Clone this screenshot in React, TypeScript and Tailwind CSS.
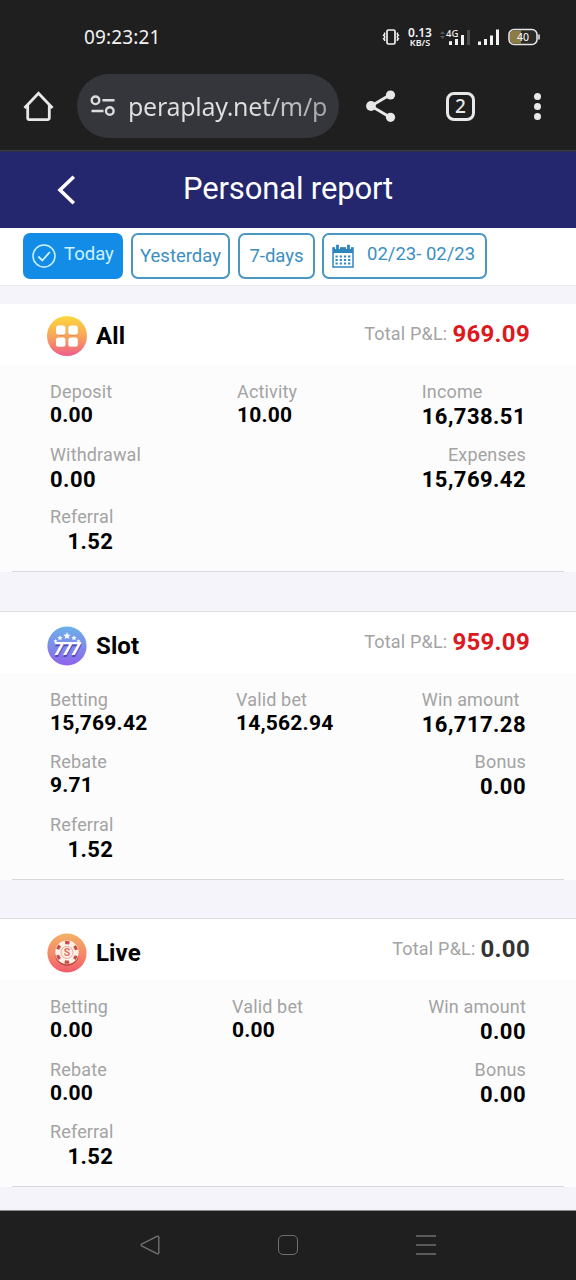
import React from 'react';
import clsx from 'clsx';

type Stat = {
  label: string;
  value: string;
  large?: boolean;
  end?: boolean;
};

type Report = {
  name: string;
  icon: React.ReactNode;
  total: string;
  positive?: boolean;
  sectionClass: string;
  headClass: string;
  middleClass: string;
  left: Stat[];
  middle: Stat;
  right: Stat[];
};

const AllIcon = () => (
  <svg width="40" height="40" viewBox="0 0 40 40">
    <defs>
      <linearGradient id="all-bg" x1="0" y1="0" x2="0" y2="1">
        <stop offset="0" stopColor="#fbd83c" />
        <stop offset="0.5" stopColor="#f8a659" />
        <stop offset="1" stopColor="#ef5c8c" />
      </linearGradient>
    </defs>
    <circle cx="20" cy="20" r="20" fill="url(#all-bg)" />
    <g fill="#c9603f" opacity="0.45">
      <rect x="9.5" y="10.8" width="9" height="9" rx="2.5" />
      <rect x="21.5" y="10.8" width="9" height="9" rx="2.5" />
      <rect x="9.5" y="22.3" width="9" height="9" rx="2.5" />
      <rect x="21.5" y="22.3" width="9" height="9" rx="2.5" />
    </g>
    <g fill="#fff">
      <rect x="9" y="9.5" width="9.5" height="9.2" rx="2.5" />
      <rect x="21.3" y="9.5" width="9.5" height="9.2" rx="2.5" />
      <rect x="9" y="21.5" width="9.5" height="9.2" rx="2.5" />
      <rect x="21.3" y="21.5" width="9.5" height="9.2" rx="2.5" />
    </g>
  </svg>
);

const SlotIcon = () => (
  <svg width="40" height="40" viewBox="0 0 40 40">
    <defs>
      <linearGradient id="slot-bg" x1="0" y1="0" x2="0" y2="1">
        <stop offset="0" stopColor="#69b2ea" />
        <stop offset="0.5" stopColor="#7e8ce8" />
        <stop offset="1" stopColor="#8f63ee" />
      </linearGradient>
    </defs>
    <circle cx="20" cy="20" r="19.6" fill="url(#slot-bg)" />
    <path
      d="M20 6l1.1 2.4 2.6.3-1.9 1.8.5 2.6-2.3-1.3-2.3 1.3.5-2.6-1.9-1.8 2.6-.3zM13 9.2l.8 1.7 1.8.2-1.3 1.3.3 1.8-1.6-.9-1.6.9.3-1.8-1.3-1.3 1.8-.2zM27 9.2l.8 1.7 1.8.2-1.3 1.3.3 1.8-1.6-.9-1.6.9.3-1.8-1.3-1.3 1.8-.2zM8.5 13l.6 1.3 1.4.2-1 1 .2 1.4-1.2-.7-1.2.7.2-1.4-1-1 1.4-.2zM31.5 13l.6 1.3 1.4.2-1 1 .2 1.4-1.2-.7-1.2.7.2-1.4-1-1 1.4-.2z"
      fill="#f2f7ff"
    />
    <g fontFamily="Roboto, sans-serif" fontWeight="900" fontStyle="italic" fontSize="17.5" textAnchor="middle">
      <g fill="#5148b8">
        <text x="11.8" y="30.8">7</text>
        <text x="20.3" y="30.8">7</text>
        <text x="28.8" y="30.8">7</text>
      </g>
      <g fill="#fff">
        <text x="11.6" y="29.4">7</text>
        <text x="20.1" y="29.4">7</text>
        <text x="28.6" y="29.4">7</text>
      </g>
    </g>
  </svg>
);

const LiveIcon = () => (
  <svg width="40" height="40" viewBox="0 0 40 40">
    <defs>
      <linearGradient id="live-bg" x1="0" y1="0" x2="0" y2="1">
        <stop offset="0" stopColor="#f3b266" />
        <stop offset="0.55" stopColor="#f58768" />
        <stop offset="1" stopColor="#f25a6a" />
      </linearGradient>
    </defs>
    <circle cx="20" cy="20" r="19.6" fill="url(#live-bg)" />
    <circle cx="20" cy="21" r="11.8" fill="#b5443f" />
    <circle cx="20" cy="19.4" r="11.8" fill="#fff1e6" />
    <circle
      cx="20"
      cy="19.4"
      r="9.8"
      fill="none"
      stroke="#cb4a48"
      strokeWidth="3.2"
      strokeDasharray="4.4 5.863"
      strokeDashoffset="2.2"
      transform="rotate(30 20 19.4)"
    />
    <circle cx="20" cy="19.4" r="6" fill="#fdf0e6" stroke="#e59a85" strokeWidth="0.8" />
    <text x="20" y="23.2" fontSize="10.5" fontWeight="700" fontFamily="Roboto, sans-serif" textAnchor="middle" fill="#dc7066">
      S
    </text>
  </svg>
);

const reports: Report[] = [
  {
    name: 'All',
    icon: <AllIcon />,
    total: '969.09',
    positive: true,
    sectionClass: 'h-[268px]',
    headClass: 'pt-3',
    middleClass: 'pl-[237px]',
    left: [
      { label: 'Deposit', value: '0.00' },
      { label: 'Withdrawal', value: '0.00', large: true },
      { label: 'Referral', value: '1.52', large: true, end: true },
    ],
    middle: { label: 'Activity', value: '10.00' },
    right: [
      { label: 'Income', value: '16,738.51', large: true },
      { label: 'Expenses', value: '15,769.42', large: true, end: true },
    ],
  },
  {
    name: 'Slot',
    icon: <SlotIcon />,
    total: '959.09',
    positive: true,
    sectionClass: 'h-[268px] shadow-[0_-1px_0_#dedee2]',
    headClass: 'pt-[14px]',
    middleClass: 'pl-[236px]',
    left: [
      { label: 'Betting', value: '15,769.42' },
      { label: 'Rebate', value: '9.71' },
      { label: 'Referral', value: '1.52', large: true, end: true },
    ],
    middle: { label: 'Valid bet', value: '14,562.94' },
    right: [
      { label: 'Win amount', value: '16,717.28', large: true },
      { label: 'Bonus', value: '0.00', large: true, end: true },
    ],
  },
  {
    name: 'Live',
    icon: <LiveIcon />,
    total: '0.00',
    sectionClass: 'h-[268px] shadow-[0_-1px_0_#dedee2]',
    headClass: 'pt-[14px]',
    middleClass: 'pl-[232px]',
    left: [
      { label: 'Betting', value: '0.00' },
      { label: 'Rebate', value: '0.00' },
      { label: 'Referral', value: '1.52', large: true, end: true },
    ],
    middle: { label: 'Valid bet', value: '0.00' },
    right: [
      { label: 'Win amount', value: '0.00', large: true, end: true },
      { label: 'Bonus', value: '0.00', large: true, end: true },
    ],
  },
];

const StatItem = ({ label, value, large, end }: Stat) => (
  <div className={clsx('flex h-[62.5px] flex-col', end ? 'items-end' : 'items-start')}>
    <span className="text-[18px] leading-[22px] tracking-[0.15px] text-[#a3a3a3]">{label}</span>
    <span
      className={clsx(
        'font-bold text-black',
        large ? 'text-[22px] leading-[27px] tracking-[0.45px]' : 'text-[21px] leading-[25px] tracking-[0.2px]'
      )}
    >
      {value}
    </span>
  </div>
);

const ReportCard = ({ report }: { report: Report }) => (
  <section className={clsx('bg-[#fcfcfc]', report.sectionClass)}>
    <header className="flex h-[61px] justify-between bg-white pl-[47px] pr-[46px]">
      <div className={clsx('flex items-start gap-[9px]', report.headClass)}>
        {report.icon}
        <h2 className="text-[24px] font-bold leading-[41px] tracking-[0.1px] text-black">{report.name}</h2>
      </div>
      <div className="flex h-[61px] items-start gap-[5px] pt-[15px]">
        <span className="text-[18px] leading-[30px] tracking-[0.2px] text-[#a3a3a3]">Total P&amp;L:</span>
        <span
          className={clsx(
            'text-[24px] font-bold leading-[31px] tracking-[0.3px]',
            report.positive ? 'text-[#dc1820]' : 'text-[#333333]'
          )}
        >
          {report.total}
        </span>
      </div>
    </header>
    <div className="relative flex h-[206px] justify-between pl-[50px] pr-[50px] pt-[16px]">
      <div className="flex flex-col items-start">
        {report.left.map((s) => (
          <div key={s.label}>
            <StatItem {...s} />
          </div>
        ))}
      </div>
      <div className={clsx('absolute left-0', report.middleClass)}>
        <StatItem {...report.middle} />
      </div>
      <div className="flex flex-col">
        {report.right.map((s) => (
          <StatItem key={s.label} {...s} />
        ))}
      </div>
    </div>
    <div className="mx-3 h-px bg-[#d9d9dc]" />
  </section>
);

const StatusBar = () => (
  <div className="flex h-[74px] items-center justify-between pl-[84px] pr-[36px] text-[#f2f2f2]">
    <span className="font-['Noto_Sans'] text-[19px] tracking-[0.15px]">09:23:21</span>
    <div className="flex items-center">
      <svg width="18" height="18" viewBox="0 0 18 18" fill="none" stroke="currentColor">
        <rect x="5" y="2" width="8" height="14" rx="1.5" strokeWidth="1.7" />
        <path d="M2.6 4.5v1.8l-1 .9 1 .9v1.8l-1 .9 1 .9v1.3M15.4 4.5v1.8l1 .9-1 .9v1.8l1 .9-1 .9v1.3" strokeWidth="1.5" />
      </svg>
      <div className="ml-[8px] flex w-6 flex-col items-center whitespace-nowrap font-['Noto_Sans'] font-semibold">
        <span className="text-[12px] leading-[11px]">0.13</span>
        <span className="text-[9px] leading-[10px]">KB/S</span>
      </div>
      <svg className="ml-2" width="32" height="18" viewBox="0 0 32 18" fill="currentColor">
        <path d="M0 6l2.5-3L5 6zM0 8l2.5 3L5 8z" fill="#555" />
        <text x="6" y="8.5" fontSize="9.5" fontWeight="500" fontFamily="'Noto Sans', sans-serif">4G</text>
        <rect x="9" y="13.2" width="3" height="3.8" />
        <rect x="15" y="11" width="3" height="6" />
        <rect x="21" y="7" width="3" height="10" />
        <rect x="27" y="2" width="3" height="15" fill="#4a4a4a" />
      </svg>
      <svg className="ml-[6px]" width="22" height="18" viewBox="0 0 22 18" fill="currentColor">
        <rect x="0" y="13.5" width="3" height="3.5" />
        <rect x="6" y="11" width="3" height="6" />
        <rect x="12" y="7.5" width="3" height="9.5" />
        <rect x="18" y="1.5" width="3" height="15.5" />
      </svg>
      <svg className="ml-2" width="32" height="18" viewBox="0 0 32 18">
        <rect x="1" y="1.5" width="28" height="15" rx="5" fill="#2a2a26" stroke="#e4e4e4" strokeWidth="1.6" />
        <path d="M13 2.5H6a4 4 0 0 0-4 4v5a4 4 0 0 0 4 4h7z" fill="#8d7c45" />
        <path d="M31 6.5v5" stroke="#e4e4e4" strokeWidth="1.6" />
        <text x="15" y="12.8" fontSize="10.5" fill="#fff" textAnchor="middle" fontFamily="'Noto Sans', sans-serif">40</text>
      </svg>
    </div>
  </div>
);

const BrowserBar = () => (
  <div className="flex h-[77px] items-start border-b border-[#3a3d40]">
    <svg className="ml-[23px] mt-[17px]" width="31" height="31" viewBox="0 0 31 31" fill="none" stroke="#e8e8e8" strokeWidth="2.8">
      <path d="M1.5 17L15.5 2.2 29.5 17M4.7 14.5V27a1.6 1.6 0 0 0 1.6 1.6h18.4a1.6 1.6 0 0 0 1.6-1.6V14.5" />
    </svg>
    <div className="ml-[23px] flex h-[64px] w-[262px] items-center rounded-full bg-[#35363b] pl-[13px]">
      <svg width="26" height="22" viewBox="0 0 26 22" fill="none" stroke="#dcdcdc" strokeWidth="2.4">
        <circle cx="5.5" cy="5.3" r="3.8" />
        <path d="M12.5 5.3h12M1.5 16h12" />
        <circle cx="19.8" cy="16" r="3.8" />
      </svg>
      <span className="ml-3 whitespace-nowrap bg-gradient-to-r from-[#e0e0e0] from-60% to-[#a4a4a8] bg-clip-text font-['Noto_Sans'] text-[25px] leading-[38px] tracking-[-0.28px] text-transparent">
        peraplay.net/m/p
      </span>
    </div>
    <svg className="ml-[26px] mt-[15px]" width="32" height="34" viewBox="0 0 32 34" fill="#e8e8e8" stroke="#e8e8e8">
      <path d="M25.5 5.5L6 17l19.5 11.5" fill="none" strokeWidth="2.8" />
      <circle cx="25.5" cy="6" r="4.6" stroke="none" />
      <circle cx="6" cy="17" r="4.9" stroke="none" />
      <circle cx="25.5" cy="28.3" r="4.6" stroke="none" />
    </svg>
    <div className="ml-[49px] mt-[18px] flex size-[29px] items-center justify-center rounded-[8px] border-[3px] border-[#e8e8e8] font-['Noto_Sans'] text-[19px] font-medium leading-none text-[#e8e8e8]">
      2
    </div>
    <div className="ml-[59px] mt-[19px] flex flex-col gap-[3px]">
      <i className="size-[7px] rounded-full bg-[#e8e8e8]" />
      <i className="size-[7px] rounded-full bg-[#e8e8e8]" />
      <i className="size-[7px] rounded-full bg-[#e8e8e8]" />
    </div>
  </div>
);

const FilterTabs = () => (
  <div className="flex h-[58px] items-start border-b border-[#ececf0] bg-white pl-[23px] pt-[5px] text-[18.5px] text-[#3b8fc0]">
    <button className="flex h-[46px] w-[100px] items-center rounded-[7px] bg-[#138ce8] pl-[9px] text-[#cdf3ff]">
      <svg width="24" height="24" viewBox="0 0 24 24" fill="none" stroke="currentColor" strokeWidth="1.5">
        <circle cx="12" cy="12" r="11" />
        <path d="M6.3 12.5l4 4 7.5-8.5" strokeWidth="1.8" />
      </svg>
      <span className="ml-[8px] pb-[2px]">Today</span>
    </button>
    <button className="ml-2 h-[46px] w-[99px] rounded-[7px] border-2 border-[#4a98c2] pt-[2px]">Yesterday</button>
    <button className="ml-2 h-[46px] w-[77px] rounded-[7px] border-2 border-[#4a98c2] pt-[2px]">7-days</button>
    <button className="ml-[7px] flex h-[46px] w-[165px] items-center rounded-[7px] border-2 border-[#4a98c2] pl-[8px]">
      <svg width="22" height="24" viewBox="0 0 22 24" fill="none" stroke="#2f86be">
        <rect x="1" y="4" width="20" height="19" strokeWidth="1.5" />
        <path d="M1 6.3h20" strokeWidth="5.5" />
        <path d="M5.5 1v4M16.5 1v4" stroke="#fff" strokeWidth="5" />
        <path d="M5.5.8v4.8M16.5.8v4.8" strokeWidth="2.8" />
        <path d="M3.5 12.5h15M3.5 16h15M3.5 19.5h15" strokeWidth="2" strokeDasharray="2.2 2" />
      </svg>
      <span className="ml-[13px] pb-[2px]">02/23- 02/23</span>
    </button>
  </div>
);

const NavBar = () => (
  <div className="flex h-[70px] items-center border-t border-[#8a8a8a] bg-[#1f1f1f] pb-[2px] text-[#707070]">
    <svg className="ml-[140px]" width="20" height="20" viewBox="0 0 20 20" fill="none" stroke="currentColor" strokeWidth="1.4">
      <path d="M1.6 9.2L17.4 1.2a1 1 0 0 1 1.4.9v15.8a1 1 0 0 1-1.4.9L1.6 10.8a.9.9 0 0 1 0-1.6z" />
    </svg>
    <div className="ml-[118px] size-5 rounded-[5px] border-[1.5px] border-current" />
    <svg className="ml-[118px]" width="20" height="20" viewBox="0 0 20 20" stroke="currentColor" strokeWidth="1.6">
      <path d="M0 1h20M0 10h20M0 19h20" />
    </svg>
  </div>
);

export default function App() {
  return (
    <div className="flex h-[1280px] w-[576px] flex-col overflow-hidden bg-[#f5f4fb] font-['Roboto',sans-serif]">
      <div className="bg-[#1f1f1f]">
        <StatusBar />
        <BrowserBar />
      </div>
      <div className="flex h-[77px] items-center border-t border-[#2c2c4c] bg-[#24276e] text-white">
        <svg className="ml-[57px]" width="20" height="30" viewBox="0 0 20 30" fill="none" stroke="currentColor" strokeWidth="3.6">
          <path d="M16.8 1.8L3 15l13.8 13.2" />
        </svg>
        <h1 className="ml-[106px] pb-[3px] text-[31px] leading-[40px] tracking-[-0.15px]">Personal report</h1>
      </div>
      <FilterTabs />
      <main className="flex flex-1 flex-col gap-[39.5px] pt-[18px]">
        {reports.map((r) => (
          <ReportCard key={r.name} report={r} />
        ))}
      </main>
      <NavBar />
    </div>
  );
}
